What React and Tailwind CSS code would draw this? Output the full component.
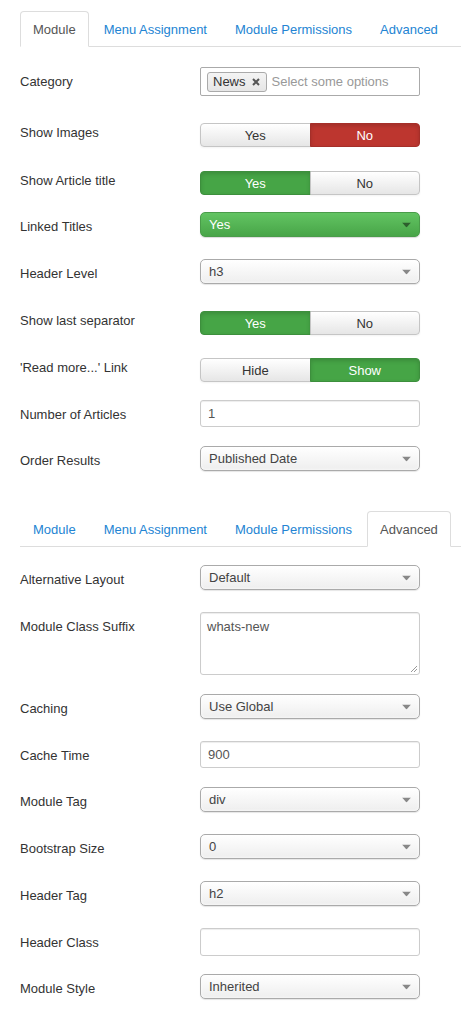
const font = { fontFamily: '"Liberation Sans", Arial, sans-serif' }

function Tabs({ active }) {
  const tabs = ['Module', 'Menu Assignment', 'Module Permissions', 'Advanced']
  return (
    <ul className="flex border-b border-[#ddd] whitespace-nowrap">
      {tabs.map((t) => (
        <li key={t} className="mr-[2px] -mb-px">
          <span
            className={
              t === active
                ? 'block px-3 pt-[9px] pb-[7px] leading-[18px] border border-[#ddd] border-b-white bg-white rounded-t-[4px] text-[#555]'
                : 'block px-3 pt-[9px] pb-[7px] leading-[18px] border border-transparent text-[#2384d3]'
            }
          >
            {t}
          </span>
        </li>
      ))}
    </ul>
  )
}

function Row({ label, h, children }) {
  return (
    <div className="flex" style={{ height: h }}>
      <div className="w-[180px] shrink-0 pt-[6px] leading-[18px] text-[#333]">{label}</div>
      <div className="w-[220px]">{children}</div>
    </div>
  )
}

function Caret({ color = '#888' }) {
  return (
    <svg width="9" height="5" viewBox="0 0 9 5" className="absolute right-[8px] top-1/2 -translate-y-1/2">
      <path d="M0 0h9L4.5 5z" fill={color} />
    </svg>
  )
}

function Select({ value }) {
  return (
    <div className="relative h-[25px] rounded-[5px] border border-[#aaa] bg-gradient-to-b from-white to-[#eee] pl-2 leading-[24px] text-[#444] shadow-[0_0_3px_#fff_inset,0_1px_1px_rgba(0,0,0,0.1)]">
      {value}
      <Caret />
    </div>
  )
}

function GreenSelect({ value }) {
  return (
    <div className="relative h-[25px] rounded-[5px] border border-[#4a9c4a] bg-gradient-to-b from-[#62c462] to-[#48a548] pl-2 leading-[24px] text-white shadow-[0_1px_1px_rgba(0,0,0,0.15)]">
      {value}
      <Caret color="#2d5e2d" />
    </div>
  )
}

function Input({ value, h = 27 }) {
  return (
    <div
      className="rounded-[3px] border border-[#ccc] bg-white px-[7px] leading-[26px] text-[#555] shadow-[inset_0_1px_1px_rgba(0,0,0,0.075)]"
      style={{ height: h }}
    >
      {value}
    </div>
  )
}

function Toggle({ options, active, color }) {
  const on = color === 'red' ? 'bg-[#bd362f] border-[#a52f29] text-white' : 'bg-[#46a546] border-[#3d8f3d] text-white'
  return (
    <div className="mt-[5px] flex h-[24px]">
      {options.map((o, i) => (
        <div
          key={o}
          className={
            'flex-1 flex items-center justify-center border pt-px leading-[18px] ' +
            (i === 0 ? 'rounded-l-[4px] ' : 'rounded-r-[4px] -ml-px ') +
            (i === active
              ? on + ' shadow-[inset_0_2px_4px_rgba(0,0,0,0.15)]'
              : 'border-[#c5c5c5] bg-gradient-to-b from-white to-[#e6e6e6] text-[#333] shadow-[inset_0_1px_0_rgba(255,255,255,0.2),0_1px_2px_rgba(0,0,0,0.05)]')
          }
        >
          {o}
        </div>
      ))}
    </div>
  )
}

export default function App() {
  return (
    <div className="min-h-screen bg-white pl-[20px] pt-[11px] text-[13px]" style={font}>
      <Tabs active="Module" />

      <div className="pt-[20px]">
        <Row label="Category" h={51}>
          <div className="flex h-[29px] items-center rounded-[2px] border border-[#aaa] bg-white pl-[6px]">
            <span className="flex h-[20px] items-center gap-[6px] rounded-[3px] border border-[#aaa] bg-gradient-to-b from-[#f4f4f4] to-[#e6e6e6] pl-[5px] pr-[6px] text-[#333]">
              News
              <svg width="8" height="8" viewBox="0 0 8 8">
                <path d="M1 1l6 6M7 1l-6 6" stroke="#555" strokeWidth="2" />
              </svg>
            </span>
            <span className="ml-[5px] text-[#999]">Select some options</span>
          </div>
        </Row>
        <Row label="Show Images" h={48}>
          <Toggle options={['Yes', 'No']} active={1} color="red" />
        </Row>
        <Row label="Show Article title" h={46}>
          <Toggle options={['Yes', 'No']} active={0} />
        </Row>
        <Row label="Linked Titles" h={47}>
          <GreenSelect value="Yes" />
        </Row>
        <Row label="Header Level" h={47}>
          <Select value="h3" />
        </Row>
        <Row label="Show last separator" h={47}>
          <Toggle options={['Yes', 'No']} active={0} />
        </Row>
        <Row label="'Read more...' Link" h={47}>
          <Toggle options={['Hide', 'Show']} active={1} />
        </Row>
        <Row label="Number of Articles" h={46}>
          <Input value="1" />
        </Row>
        <Row label="Order Results" h={65}>
          <Select value="Published Date" />
        </Row>
      </div>

      <Tabs active="Advanced" />

      <div className="pt-[18px]">
        <Row label="Alternative Layout" h={47}>
          <Select value="Default" />
        </Row>
        <Row label="Module Class Suffix" h={82}>
          <div className="relative h-[63px] rounded-[3px] border border-[#ccc] bg-white px-[6px] pt-[5px] leading-[18px] text-[#555] shadow-[inset_0_1px_1px_rgba(0,0,0,0.075)]">
            whats-new
            <svg width="7" height="7" viewBox="0 0 7 7" className="absolute bottom-[2px] right-[2px]">
              <path d="M1 7L7 1M4 7l3-3" stroke="#999" strokeWidth="1" />
            </svg>
          </div>
        </Row>
        <Row label="Caching" h={47}>
          <Select value="Use Global" />
        </Row>
        <Row label="Cache Time" h={46}>
          <Input value="900" />
        </Row>
        <Row label="Module Tag" h={47}>
          <Select value="div" />
        </Row>
        <Row label="Bootstrap Size" h={47}>
          <Select value="0" />
        </Row>
        <Row label="Header Tag" h={47}>
          <Select value="h2" />
        </Row>
        <Row label="Header Class" h={46}>
          <Input value="" h={28} />
        </Row>
        <Row label="Module Style" h={47}>
          <Select value="Inherited" />
        </Row>
      </div>
    </div>
  )
}
